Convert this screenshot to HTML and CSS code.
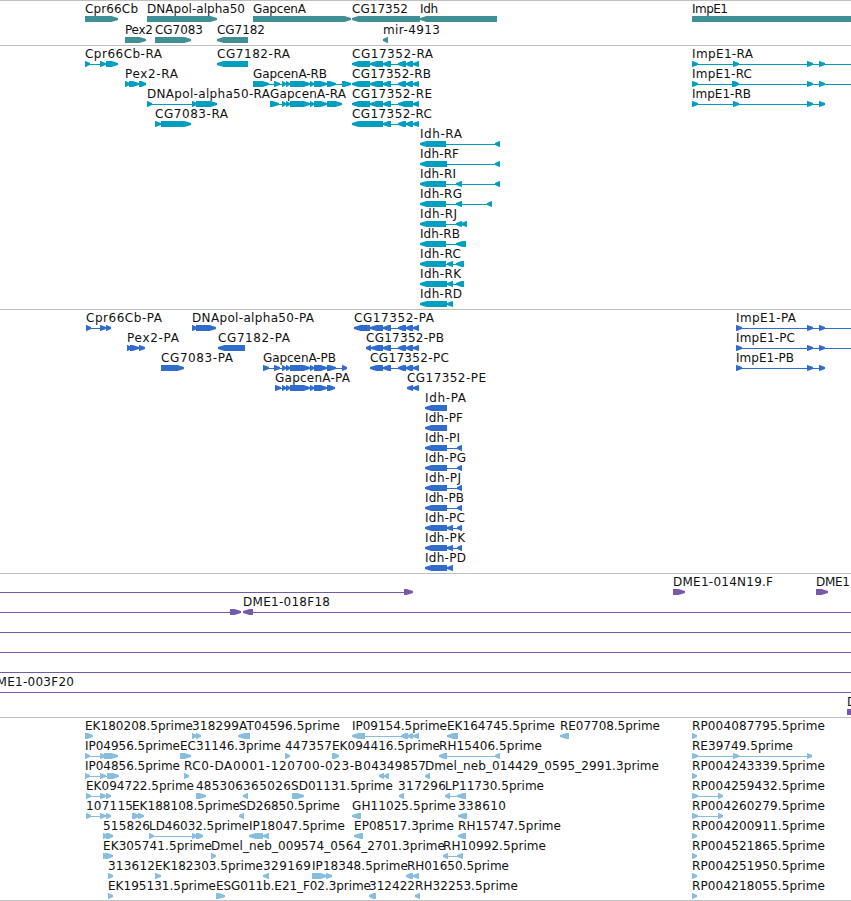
FILE: index.html
```html
<!DOCTYPE html>
<html lang="en">
<head>
<meta charset="utf-8">
<title>Genome tracks</title>
<link rel="stylesheet" href="styles.css">
</head>
<body>
<main class="browser">
  <section class="track genes" data-track="genes"></section>
  <section class="track transcripts" data-track="transcripts"></section>
  <section class="track proteins" data-track="proteins"></section>
  <section class="track clones" data-track="clones"></section>
  <section class="track ests" data-track="ests"></section>
</main>
<script src="tracks.js"></script>
</body>
</html>
```

FILE: styles.css
```css
body {
  margin: 0;
  background: #fff;
  overflow: hidden;
}

.browser {
  display: flex;
  flex-direction: column;
  width: 851px;
  height: 901px;
  overflow: hidden;
}

.track {
  flex: none;
  box-sizing: border-box;
  border-top: 1px solid #bfbfbf;
  overflow: hidden;
}

.track svg {
  display: block;
  width: 851px;
  height: 100%;
}

.genes { height: 45px; color: #3f8f94; }
.transcripts { height: 264px; color: #009fc0; }
.proteins { height: 264px; color: #2f6ccb; }
.clones { height: 144px; color: #7759a9; }
.ests { height: 184px; color: #87bddd; border-bottom: 1px solid #bfbfbf; }

.shape {
  fill: currentColor;
}

.line {
  shape-rendering: crispEdges;
}

.label {
  fill: #111;
  font: 12px "DejaVu Sans", sans-serif;
}
```

FILE: tracks.js
```js
// One feature per line: row | strand | label start-end | label | exon ranges | extra line range
const tracks = {
genes: `
1|R|85 138|Cpr66Cb|85-118
1|R|147 245|DNApol-alpha50|147-217
1|R|253 306|GapcenA|253-351
1|L|352 408|CG17352|352-420
1|L|420 438|Idh|420-497
1|R|692 728|ImpE1|692-870
2|R|125 153|Pex2|125-146
2|R|155 203|CG7083|155-191
2|L|217 265|CG7182|217-248
2|L|383 440|mir-4913|383-388`,
transcripts: `
1|R|85 162|Cpr66Cb-RA|85-90,100-106,106-118
1|L|217 290|CG7182-RA|217-248
1|L|352 433|CG17352-RA|352-370,370-383,383-391,398-406,406-413,413-419
1|R|692 753|ImpE1-RA|692-698,733-739,807-813,819-825|692,860
2|R|125 178|Pex2-RA|125-130,129-139,139-146
2|R|253 327|GapcenA-RB|253-269,274-280,282-286,286-290,290-310,310-314,314-327,327-336,342-351
2|L|352 431|CG17352-RB|352-370,370-383,383-391,398-406,406-413,413-419
2|R|692 752|ImpE1-RC|692-698,732-739,807-813,819-825|692,860
3|R|147 270|DNApol-alpha50-RA|147-152,192-197,196-217
3|R|270 346|GapcenA-RA|270-279,282-286,286-290,290-310,310-314,314-327,327-342
3|L|352 432|CG17352-RE|352-370,370-383,383-391,398-413,413-419
3|R|692 751|ImpE1-RB|692-698,733-739,807-813,819-825
4|R|155 228|CG7083-RA|155-161,161-191
4|L|352 432|CG17352-RC|352-383,383-391,398-406,406-413,413-419
5|L|420 462|Idh-RA|420-446,495-500
6|L|420 459|Idh-RF|420-447,495-500
7|L|420 456|Idh-RI|420-446,456-462,495-500
8|L|420 462|Idh-RG|420-446,456-462,487-492
9|L|420 457|Idh-RJ|420-446,456-462,461-467
10|L|420 460|Idh-RB|420-446,456-466
11|L|420 461|Idh-RC|420-446,447-453,456-464
12|L|420 461|Idh-RK|420-447,447-453,456-464
13|L|420 462|Idh-RD|420-447,447-453`,
proteins: `
1|R|86 162|Cpr66Cb-PA|86-91,100-106,106-111
1|R|192 314|DNApol-alpha50-PA|192-197,196-216
1|L|354 434|CG17352-PA|354-370,370-383,383-391,398-406,406-413,413-419
1|R|736 796|ImpE1-PA|736-742,807-813,819-825|736,860
2|R|127 179|Pex2-PA|127-132,130-139,139-145
2|L|218 290|CG7182-PA|218-245
2|L|366 444|CG17352-PB|366-371,371-383,383-391,398-406,406-413,413-419
2|R|736 795|ImpE1-PC|736-742,807-813,819-825|736,860
3|R|161 233|CG7083-PA|161-184
3|R|263 336|GapcenA-PB|263-269,274-280,282-286,286-290,290-310,310-314,314-327,327-336,342-347
3|L|370 449|CG17352-PC|370-383,383-391,398-406,406-413,413-419
3|R|736 794|ImpE1-PB|736-742,807-813,819-825
4|R|275 350|GapcenA-PA|275-281,282-286,286-290,290-310,310-314,314-327,327-335
4|L|407 486|CG17352-PE|407-413,413-419
5|L|425 466|Idh-PA|425-447
6|L|425 463|Idh-PF|425-447
7|L|425 460|Idh-PI|425-447,457-462
8|L|425 466|Idh-PG|425-447,457-462
9|L|425 461|Idh-PJ|425-447,457-462
10|L|425 464|Idh-PB|425-447,457-462
11|L|425 465|Idh-PC|425-447,447-453,457-462
12|L|425 465|Idh-PK|425-447,447-453,457-462
13|L|425 466|Idh-PD|425-447,447-453`,
clones: `
1|R|||404-413|-10,404
1|R|673 773|DME1-014N19.F|673-685
1|R|816 850|DME1|816-828
2|R|||230-241|-10,230
2|L|243 330|DME1-018F18|243-253|243,860
3|R||||-10,860
4|R||||-10,860
5|R||||-10,860
6|R|-13 74|DME1-003F20||-10,860
7|R|847 856|D|847-859`,
ests: `
1|R|85 193|EK180208.5prime|85-93
1|R|192 239|318299|192-197,196-201
1|L|239 340|AT04596.5prime|238-250
1|L|352 447|IP09154.5prime|352-365,401-408,407-413,413-419
1|L|447 555|EK164745.5prime|447-458
1|L|560 660|RE07708.5prime|560-569
1|R|692 825|RP004087795.5prime|692-697
2|R|85 180|IP04956.5prime|85-90,100-105,104-118
2|R|180 281|EC31146.3prime|180-191
2|R|285 332|447357|285-290
2|R|332 440|EK094416.5prime|332-339
2|L|439 542|RH15406.5prime|439-447,495-500
2|R|692 793|RE39749.5prime|692-698,733-739,807-812
3|R|85 180|IP04856.5prime|85-90,100-106,107-119
3|R|184 379|RC0-DA0001-120700-023-B04|184-189
3|L|379 426|349857|379-384,384-389
3|L|425 659|Dmel_neb_014429_0595_2991.3prime|425-430
3|R|692 825|RP004243339.5prime|692-697
4|R|86 194|EK094722.5prime|86-91,100-106,106-111
4|R|196 243|485306|196-206
4|L|243 291|365026|243-248
4|R|291 393|SD01131.5prime|292-304
4|L|398 446|317296|399-404
4|L|445 544|LP11730.5prime|445-450,457-466
4|R|692 825|RP004259432.5prime|692-698,718-723
5|R|86 133|107115|86-91,100-106,106-111
5|R|132 240|EK188108.5prime|132-139,138-144
5|L|239 340|SD26850.5prime|239-244
5|L|352 456|GH11025.5prime|352-361
5|L|458 506|338610|458-467
5|R|692 825|RP004260279.5prime|692-698,718-723
6|R|103 150|515826|103-108,106-113
6|R|149 249|LD46032.5prime|149-154,192-197,196-203
6|L|249 345|IP18047.5prime|249-263,263-269
6|L|354 454|EP08517.3prime|354-363
6|L|458 561|RH15747.5prime|458-466
6|R|692 825|RP004200911.5prime|692-697
7|R|103 212|EK305741.5prime|103-108,105-113
7|R|211 445|Dmel_neb_009574_0564_2701.3prime|211-216
7|L|443 546|RH10992.5prime|443-448,457-463
7|R|692 825|RP004521865.5prime|692-697
8|R|108 155|313612|108-113
8|R|155 263|EK182303.5prime|155-161
8|L|263 311|329169|263-269
8|R|312 408|IP18348.5prime|312-327,326-332
8|L|407 509|RH01650.5prime|406-413,413-419
8|R|692 825|RP004251950.5prime|692-697
9|R|108 216|EK195131.5prime|108-113
9|R|216 371|ESG011b.E21_F02.3prime|216-225
9|L|369 415|312422|369-376
9|L|415 518|RH32253.5prime|415-420
9|R|692 825|RP004218055.5prime|692-697`
};

// Exon block with a blunt point in the direction of the strand.
function exon(a, b, y, strand) {
  const w = b - a;
  const tip = w <= 6 ? w : Math.min(w - 2, 7);
  return strand === 'R'
    ? `M${a} ${y}H${b - tip + 0.5}L${b} ${y + 2}V${y + 4}L${b - tip + 0.5} ${y + 6}H${a}Z`
    : `M${b} ${y}H${a + tip - 0.5}L${a} ${y + 2}V${y + 4}L${a + tip - 0.5} ${y + 6}H${b}Z`;
}

document.querySelectorAll('.track').forEach((section) => {
  const name = section.dataset.track;
  const pitch = name === 'genes' ? 21 : 20;
  let out = '';
  tracks[name].trim().split('\n').forEach((line) => {
    const [row, strand, span, label, exons, extra] = line.split('|');
    const top = (row - 1) * pitch;
    const parts = exons ? exons.split(',').map((r) => r.split('-').map(Number)) : [];
    const range = extra ? extra.split(',').map(Number)
      : [parts[0][0], parts[parts.length - 1][1] - 1];
    const d = parts.map(([a, b]) => exon(a, b, top + 15, strand)).join('');
    if (extra || parts.length > 1) {
      out += `<rect class="shape line" x="${range[0]}" y="${top + 18}" width="${range[1] - range[0]}" height="1"/>`;
    }
    out += `<path class="shape" d="${d}"/>`;
    if (label) {
      const [x, end] = span.split(' ').map(Number);
      out += `<text class="label" x="${x}" y="${top + 12}" textLength="${end - x}">${label}</text>`;
    }
  });
  section.innerHTML = `<svg>${out}</svg>`;
});
```
